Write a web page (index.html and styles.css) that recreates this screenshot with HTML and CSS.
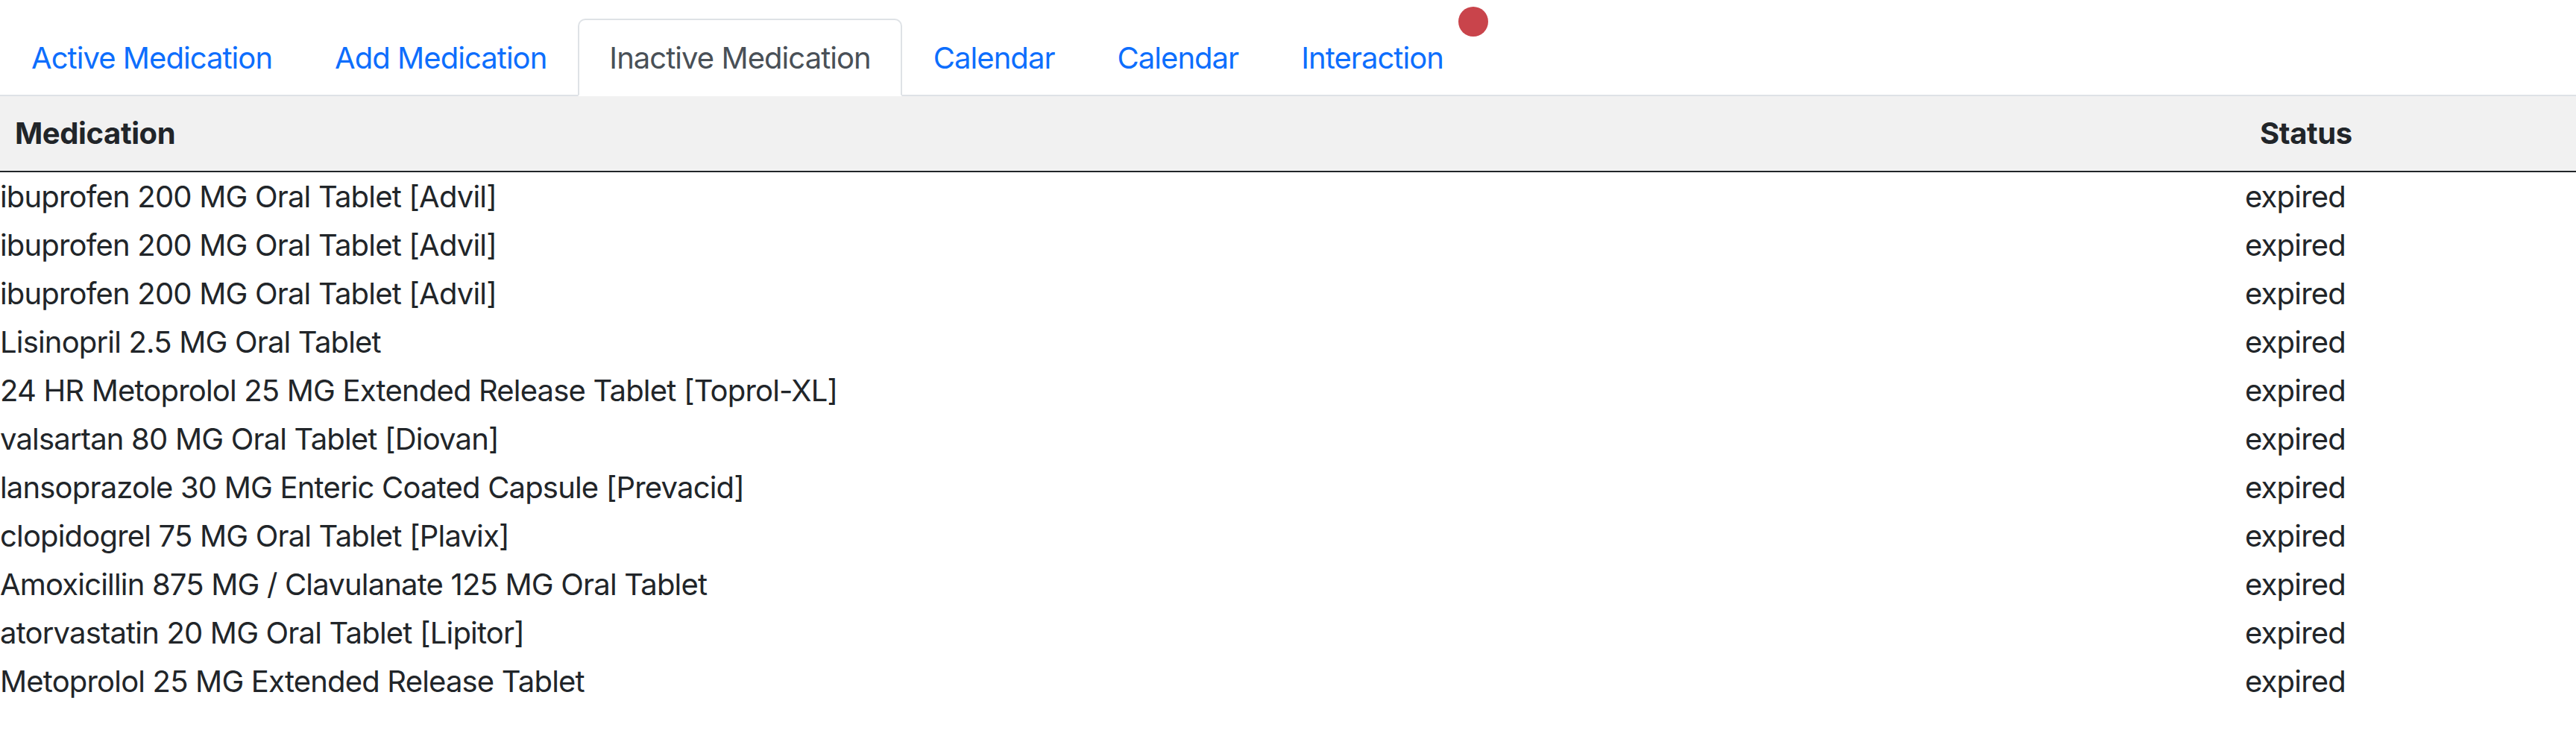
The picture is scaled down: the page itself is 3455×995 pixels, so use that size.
FILE: index.html
```html
<!DOCTYPE html>
<html lang="en">
<head>
<meta charset="utf-8">
<title>Inactive Medication</title>
<link rel="stylesheet" href="styles.css">
</head>
<body>
<ul class="nav-tabs">
  <li class="nav-item"><a class="nav-link" href="#">Active Medication</a></li>
  <li class="nav-item"><a class="nav-link" href="#">Add Medication</a></li>
  <li class="nav-item"><a class="nav-link active" href="#">Inactive Medication</a></li>
  <li class="nav-item"><a class="nav-link" href="#">Calendar</a></li>
  <li class="nav-item"><a class="nav-link" href="#">Calendar</a></li>
  <li class="nav-item"><a class="nav-link has-dot" href="#">Interaction<span class="dot"></span></a></li>
</ul>
<table class="med-table">
  <colgroup>
    <col class="col-med">
    <col class="col-status">
  </colgroup>
  <thead>
    <tr><th>Medication</th><th>Status</th></tr>
  </thead>
  <tbody>
    <tr><td>ibuprofen 200 MG Oral Tablet [Advil]</td><td>expired</td></tr>
    <tr><td>ibuprofen 200 MG Oral Tablet [Advil]</td><td>expired</td></tr>
    <tr><td>ibuprofen 200 MG Oral Tablet [Advil]</td><td>expired</td></tr>
    <tr><td>Lisinopril 2.5 MG Oral Tablet</td><td>expired</td></tr>
    <tr><td>24 HR Metoprolol 25 MG Extended Release Tablet [Toprol-XL]</td><td>expired</td></tr>
    <tr><td>valsartan 80 MG Oral Tablet [Diovan]</td><td>expired</td></tr>
    <tr><td>lansoprazole 30 MG Enteric Coated Capsule [Prevacid]</td><td>expired</td></tr>
    <tr><td>clopidogrel 75 MG Oral Tablet [Plavix]</td><td>expired</td></tr>
    <tr><td>Amoxicillin 875 MG / Clavulanate 125 MG Oral Tablet</td><td>expired</td></tr>
    <tr><td>atorvastatin 20 MG Oral Tablet [Lipitor]</td><td>expired</td></tr>
    <tr><td>Metoprolol 25 MG Extended Release Tablet</td><td>expired</td></tr>
  </tbody>
</table>
</body>
</html>
```
FILE: styles.css
```css
html, body {
  margin: 0;
  padding: 0;
  background: #ffffff;
}
body {
  font-family: Inter, "Liberation Sans", sans-serif;
  font-size: 40px;
  line-height: 60px;
  letter-spacing: -0.95px;
  color: #212529;
}
.nav-tabs {
  display: flex;
  list-style: none;
  margin: 25px 0 0 0;
  padding: 0;
  border-bottom: 2px solid #dee2e6;
}
.nav-item {
  margin-bottom: -2px;
}
.nav-link {
  position: relative;
  display: block;
  padding: 21px 40px 19px;
  border: 2px solid transparent;
  border-radius: 10px 10px 0 0;
  color: #0d6efd;
  text-decoration: none;
}
.nav-link.active {
  color: #495057;
  background: #ffffff;
  border-color: #dee2e6 #dee2e6 #ffffff;
}
.dot {
  position: absolute;
  top: 2px;
  left: 100%;
  width: 40px;
  height: 40px;
  border-radius: 50%;
  background: #c9444b;
  transform: translate(-50%, -50%);
}
.med-table {
  width: 100%;
  border-collapse: collapse;
  table-layout: fixed;
}
.col-status {
  width: 444px;
}
.med-table th {
  text-align: left;
  font-weight: 700;
  letter-spacing: -0.4px;
  padding: 20px;
  background: #f1f1f1;
  border-bottom: 2px solid #212529;
}
.med-table td {
  padding: 2.5px 0;
  letter-spacing: -0.82px;
  white-space: nowrap;
}
```
